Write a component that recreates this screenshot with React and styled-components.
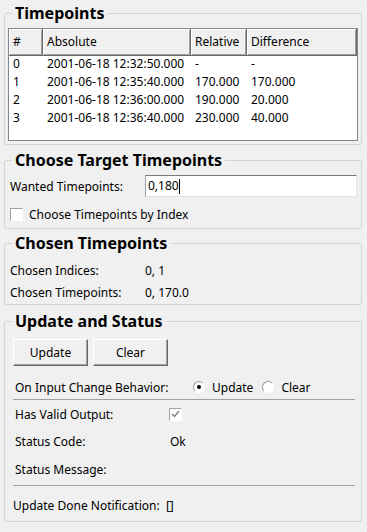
import styled, { createGlobalStyle } from 'styled-components';

const GlobalStyle = createGlobalStyle`
    html, body {
        margin: 0;
        padding: 0;
        background: #f0f0f0;
    }
    body {
        font-family: "Noto Sans", "Open Sans", sans-serif;
        font-size: 12px;
        color: #000;
    }
`;

const Page = styled.div`
    width: 367px;
    height: 532px;
    box-sizing: border-box;
    padding: 4px 5px 0 4px;
    display: flex;
    flex-direction: column;
`;

const Group = styled.fieldset`
    margin: ${p => p.$mt || 0}px 0 0 0;
    padding: 0;
    min-width: 0;
    border: 1px solid #d5d5d5;
    border-radius: 2px;
`;

const Legend = styled.legend`
    margin-left: 7px;
    padding: 0 3px;
    font-size: 16px;
    font-weight: 700;
    line-height: 18px;
`;

const Body = styled.div`
    padding: ${p => p.$pad};
    display: flex;
    flex-direction: column;
`;

/* таблица */
const TableFrame = styled.div`
    height: 113px;
    box-sizing: border-box;
    border: 1px solid #828790;
    background: #fff;
`;

const cols = '34px 148px 56px 1fr';

const HeadRow = styled.div`
    display: grid;
    grid-template-columns: ${cols};
    height: 25px;
`;

const HeadCell = styled.div`
    box-sizing: border-box;
    background: #f0f0f0;
    border-right: 1px solid #696969;
    border-bottom: 1px solid #696969;
    box-shadow: inset 1px 1px #fff, inset -1px -1px #a0a0a0;
    padding-left: 4px;
    line-height: 26px;
    white-space: nowrap;
`;

const Rows = styled.div`
    padding-top: 1px;
`;

const Row = styled.div`
    display: grid;
    grid-template-columns: ${cols};
    height: 18px;
    line-height: 18px;
`;

const Cell = styled.div`
    padding-left: 4px;
    white-space: nowrap;
`;

/* формы */
const FormRow = styled.div`
    display: flex;
    align-items: center;
    height: ${p => p.$h || 20}px;
    margin-top: ${p => p.$mt || 0}px;
    padding-left: ${p => p.$indent || 0}px;
    white-space: nowrap;
`;

const Label = styled.span`
    width: ${p => p.$w}px;
    flex: none;
`;

const TextInput = styled.div`
    flex: 1;
    height: 22px;
    box-sizing: border-box;
    background: #fff;
    border: 1px solid #e3e3e3;
    border-top-color: #7a7a7a;
    border-left-color: #a0a0a0;
    padding-left: 2px;
    line-height: 20px;
    display: flex;
    align-items: center;
`;

const Caret = styled.span`
    display: inline-block;
    width: 1px;
    height: 15px;
    background: #000;
`;

const Box = styled.span`
    width: 13px;
    height: 13px;
    box-sizing: border-box;
    flex: none;
    background: #fff;
    border: 1px solid #fff;
    border-top-color: #a0a0a0;
    border-left-color: #a0a0a0;
    margin-right: ${p => p.$mr || 0}px;
    display: flex;
    align-items: center;
    justify-content: center;
`;

const Buttons = styled.div`
    display: flex;
    gap: 5px;
    margin-top: 9px;
`;

const Button = styled.button`
    width: 75px;
    height: 27px;
    box-sizing: border-box;
    background: #f0f0f0;
    border: 1px solid #696969;
    border-top-color: #fff;
    border-left-color: #fff;
    box-shadow: inset -1px -1px #a0a0a0;
    font: inherit;
    color: #000;
    padding: 0;
`;

const Radio = styled.span`
    position: relative;
    width: 12px;
    height: 12px;
    box-sizing: border-box;
    border-radius: 50%;
    background: #fff;
    border: 1px solid #fff;
    border-top-color: #9a9a9a;
    border-left-color: #9a9a9a;
    margin-right: 7px;
    flex: none;
    &::after {
        content: '';
        display: ${p => (p.$on ? 'block' : 'none')};
        position: absolute;
        left: 3px;
        top: 3px;
        width: 4px;
        height: 4px;
        border-radius: 50%;
        background: #000;
    }
`;

const RadioText = styled.span`
    margin-right: ${p => p.$mr || 0}px;
`;

const Separator = styled.div`
    height: 1px;
    background: #a0a0a0;
    margin-top: ${p => p.$mt}px;
`;

const data = [
    ['0', '2001-06-18 12:32:50.000', '-', '-'],
    ['1', '2001-06-18 12:35:40.000', '170.000', '170.000'],
    ['2', '2001-06-18 12:36:00.000', '190.000', '20.000'],
    ['3', '2001-06-18 12:36:40.000', '230.000', '40.000'],
];

function App() {
    return (
        <Page>
            <GlobalStyle />

            <Group>
                <Legend>Timepoints</Legend>
                <Body $pad='6px 3px 3px 3px'>
                    <TableFrame>
                        <HeadRow>
                            <HeadCell>#</HeadCell>
                            <HeadCell>Absolute</HeadCell>
                            <HeadCell>Relative</HeadCell>
                            <HeadCell>Difference</HeadCell>
                        </HeadRow>
                        <Rows>
                            {data.map(r => (
                                <Row key={r[0]}>
                                    {r.map((v, i) => <Cell key={i}>{v}</Cell>)}
                                </Row>
                            ))}
                        </Rows>
                    </TableFrame>
                </Body>
            </Group>

            <Group $mt={6}>
                <Legend>Choose Target Timepoints</Legend>
                <Body $pad='6px 4px 5px 5px'>
                    <FormRow $h={22}>
                        <Label $w={135}>Wanted Timepoints:</Label>
                        <TextInput>0,180<Caret /></TextInput>
                    </FormRow>
                    <FormRow $h={18} $mt={8}>
                        <Box $mr={6} />
                        Choose Timepoints by Index
                    </FormRow>
                </Body>
            </Group>

            <Group $mt={5}>
                <Legend>Chosen Timepoints</Legend>
                <Body $pad='8px 4px 2px 5px'>
                    <FormRow>
                        <Label $w={135}>Chosen Indices:</Label>0, 1
                    </FormRow>
                    <FormRow $mt={2}>
                        <Label $w={135}>Chosen Timepoints:</Label>0, 170.0
                    </FormRow>
                </Body>
            </Group>

            <Group $mt={7}>
                <Legend>Update and Status</Legend>
                <Body $pad='0 6px 6px 8px'>
                    <Buttons>
                        <Button>Update</Button>
                        <Button>Clear</Button>
                    </Buttons>
                    <FormRow $mt={11} $indent={2}>
                        <Label $w={178}>On Input Change Behavior:</Label>
                        <Radio $on />
                        <RadioText $mr={9}>Update</RadioText>
                        <Radio />
                        <RadioText>Clear</RadioText>
                    </FormRow>
                    <Separator $mt={2} />
                    <FormRow $mt={4} $indent={2}>
                        <Label $w={154}>Has Valid Output:</Label>
                        <Box>
                            <svg width="9" height="8" viewBox="0 0 9 8">
                                <path d="M1 4 L3.5 6.5 L8 1" fill="none" stroke="#808080" strokeWidth="1.4" />
                            </svg>
                        </Box>
                    </FormRow>
                    <FormRow $mt={7} $indent={2}>
                        <Label $w={155}>Status Code:</Label>Ok
                    </FormRow>
                    <FormRow $mt={8} $indent={2}>
                        <Label $w={155}>Status Message:</Label>
                    </FormRow>
                    <Separator $mt={6} />
                    <FormRow $mt={9}>
                        Update Done Notification:&nbsp; []
                    </FormRow>
                </Body>
            </Group>
        </Page>
    );
}

export default App;
